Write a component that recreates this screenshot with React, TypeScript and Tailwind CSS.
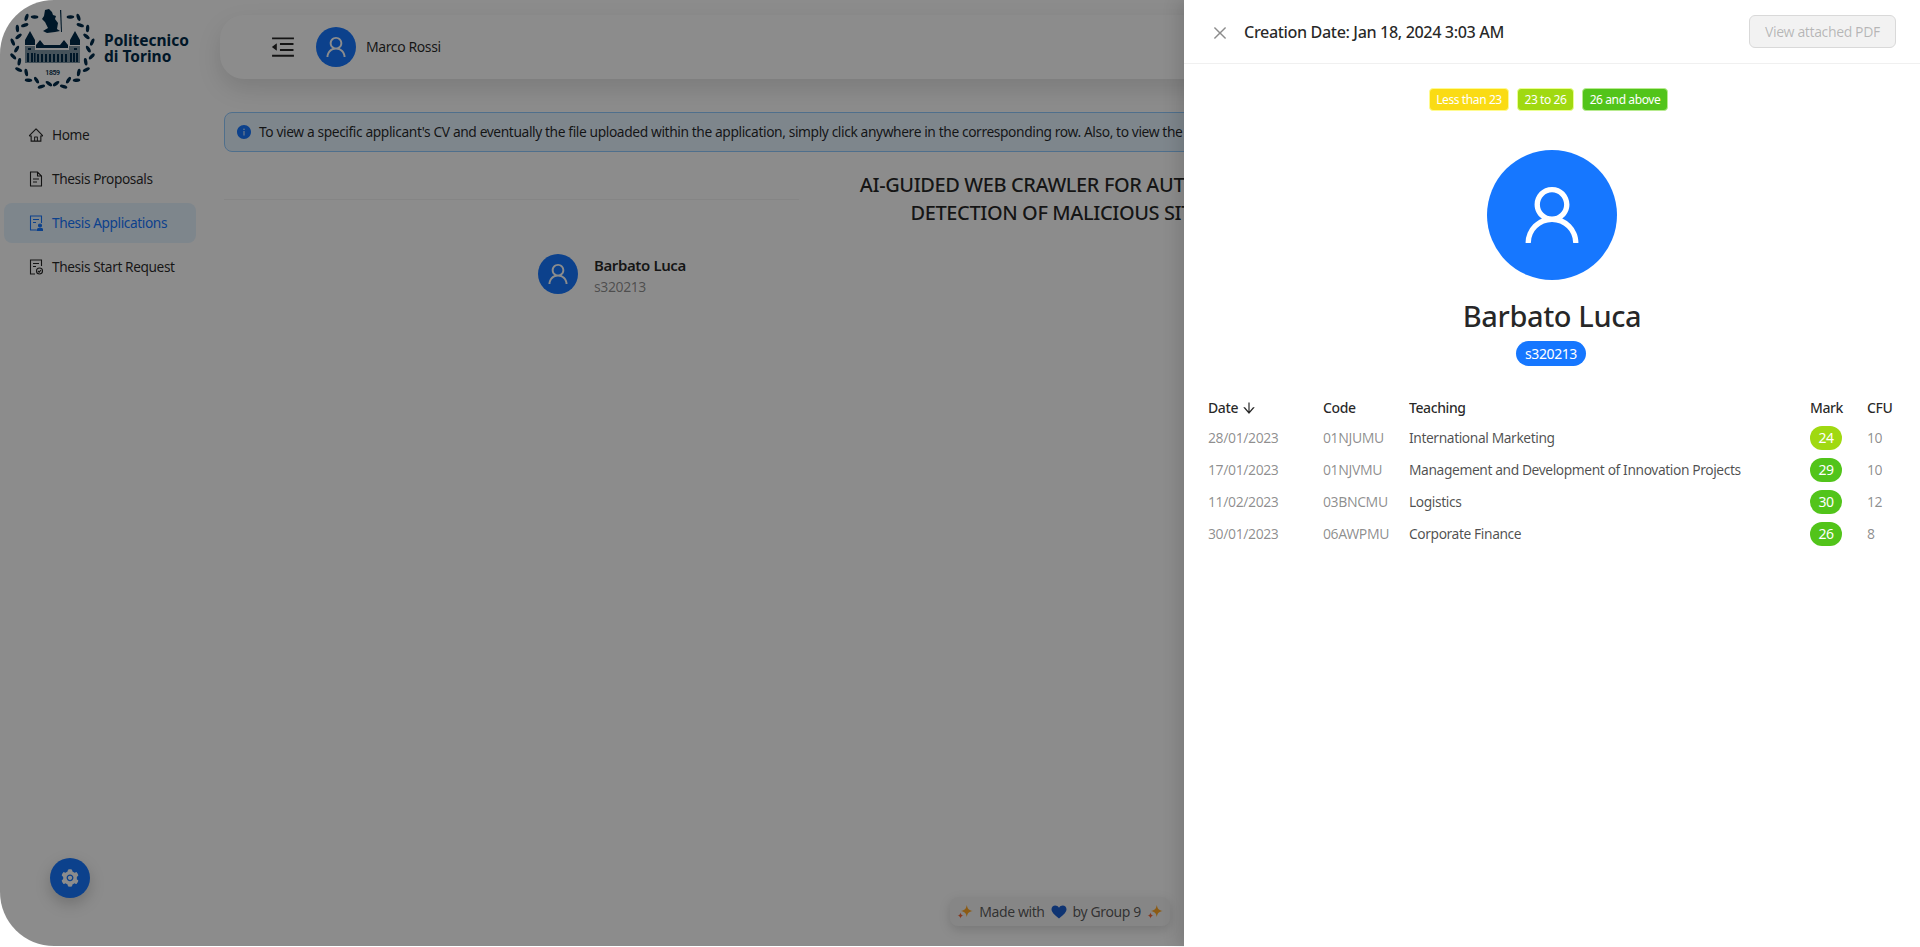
import {
  AiFillInfoCircle,
  AiFillSetting,
  AiOutlineArrowDown,
  AiOutlineClose,
  AiOutlineHome,
  AiOutlineMenuFold,
  AiOutlineUser,
} from "react-icons/ai";
import type { ReactNode } from "react";

const font = "font-['Noto_Sans','Liberation_Sans',sans-serif] tracking-[-0.025em]";

const EXAMS = [
  { date: "28/01/2023", code: "01NJUMU", name: "International Marketing", mark: 24, cfu: 10 },
  { date: "17/01/2023", code: "01NJVMU", name: "Management and Development of Innovation Projects", mark: 29, cfu: 10 },
  { date: "11/02/2023", code: "03BNCMU", name: "Logistics", mark: 30, cfu: 12 },
  { date: "30/01/2023", code: "06AWPMU", name: "Corporate Finance", mark: 26, cfu: 8 },
];

function DocIcon({ children }: { children: ReactNode }) {
  return (
    <svg viewBox="0 0 14 16" className="h-4 w-[14px] shrink-0" fill="none" stroke="currentColor" strokeWidth="1.1">
      {children}
    </svg>
  );
}

function Logo() {
  // two rows of laurel leaves, mirrored on each side of the crest
  const leaves = Array.from({ length: 15 }, (_, i) => 30 + i * 10.300).flatMap((deg, i) => {
    const a = (deg * Math.PI) / 180;
    const radius = i % 2 ? 1.03 : 0.92;
    return [-1, 1].map((side) => ({
      x: 44.5 + side * 39 * radius * Math.sin(a),
      y: 42 - 39 * radius * Math.cos(a),
      r: side * (deg + 90 + (i % 2 ? 32 : -32)),
    }));
  });
  return (
    <svg viewBox="0 0 88 84" className="h-[84px] w-[88px] shrink-0 text-[#002b49]" fill="currentColor">
      {leaves.map((l, i) => (
        <ellipse key={i} cx={l.x} cy={l.y} rx="1.700" ry="3.800" transform={`rotate(${l.r} ${l.x} ${l.y})`} />
      ))}
      <path d="M37 4l4-1 3 3 1 3 3 1-1 3 3 4-1 6 3 2-5 1-8 1-4-2 5-3-3-6-3-3 2-3z" />
      <path d="M52 4l1.200 0 .8 22-1 0z" />
      <path d="M17 34l5-9 5 9v5H17zM62 34l5-9 5 9v5H62z" />
      <path d="M28 39l4-5 4 5 16 0 4-5 4 5v3H28z" />
      <path d="M17 40h10v4h34v-4h11v17H17z" opacity=".5" />
      <path d="M19 47h2v9h-2zM23 47h2v9h-2zM26 47h1.500v9H26zM29 48h2v8h-2zM33 48h2v8h-2zM37 48h2v8h-2zM41 48h2v8h-2zM45 48h2v8h-2zM49 48h2v8h-2zM53 48h2v8h-2zM57 48h2v8h-2zM62 47h2v9h-2zM65 47h2v9h-2zM68 47h2v9h-2z" />
      <path d="M20 42h3v2h-3zM66 42h3v2h-3z" />
      <text x="44.500" y="69" textAnchor="middle" fontSize="7" fontWeight="600" fontFamily="Roboto, sans-serif">1859</text>
    </svg>
  );
}

function NavItem({ icon, label, active }: { icon: ReactNode; label: string; active?: boolean }) {
  return (
    <div
      className={`mx-1 flex h-10 items-center gap-2 rounded-lg pl-6 text-[13.700px] ${
        active ? "bg-[#e6f4ff] text-[#1677ff]" : "text-black/85"
      }`}
    >
      <span className="flex w-[16px] justify-center">{icon}</span>
      {label}
    </div>
  );
}

function Sparkle() {
  return (
    <svg viewBox="0 0 16 16" className="h-[16px] w-[16px] shrink-0">
      <path d="M9.800 1c.7 3.900 2.100 5.300 6 6-3.900.7-5.300 2.100-6 6-.7-3.900-2.100-5.300-6-6 3.900-.7 5.300-2.100 6-6z" fill="#ffa726" />
      <path d="M3.500 8.500c.4 2 1.100 2.700 3 3-1.900.4-2.600 1.100-3 3.100-.4-2-1.100-2.700-3-3.100 1.900-.3 2.600-1 3-3z" fill="#f4693a" />
    </svg>
  );
}

function Legend({ label, color }: { label: string; color: string }) {
  return <span className={`flex h-[23px] items-center justify-center rounded border text-xs text-white ${color}`}>{label}</span>;
}

export default function App() {
  return (
    <div className={`relative h-[947px] w-[1920px] overflow-hidden bg-white ${font}`}>
      {/* page behind the drawer */}
      <div className="relative h-[946px] overflow-hidden rounded-l-[54px] bg-white">
        <div className="flex h-full">
          <aside className="flex w-[200px] shrink-0 flex-col">
            <div className="flex h-[92px] items-start pt-[6px] pl-[8px]">
              <Logo />
              <div className="mt-[26px] ml-[8px] flex flex-col text-[15.500px] leading-[16px] font-bold tracking-normal text-[#002b49]">
                <span>Politecnico</span>
                <span>di Torino</span>
              </div>
            </div>
            <nav className="mt-[23px] flex flex-col gap-1">
              <NavItem icon={<AiOutlineHome size={16} />} label="Home" />
              <NavItem
                label="Thesis Proposals"
                icon={
                  <DocIcon>
                    <path d="M1.500 1h7l4 4v10h-11zM8.500 1v4h4M4 8h6M4 11h4" />
                  </DocIcon>
                }
              />
              <NavItem
                active
                label="Thesis Applications"
                icon={
                  <DocIcon>
                    <path d="M7 15H1.500V1h11v7M4 4.500h6M4 7.500h3" />
                    <circle cx="11" cy="10.500" r="1.500" fill="currentColor" />
                    <path d="M8 15.500c0-3 6-3 6 0z" fill="currentColor" />
                  </DocIcon>
                }
              />
              <NavItem
                label="Thesis Start Request"
                icon={
                  <DocIcon>
                    <path d="M6 15H1.500V1h11v6M4 4.500h6M4 7.500h3" />
                    <circle cx="10.500" cy="12" r="3" />
                    <path d="M9 12l1.200 1.200L12 11" />
                  </DocIcon>
                }
              />
            </nav>
            <div className="mt-auto mb-[48px] ml-[50px] flex h-10 w-10 items-center justify-center rounded-full bg-[#1677ff] text-white shadow-[0_6px_16px_rgba(0,0,0,0.2)]">
              <AiFillSetting size={20} />
            </div>
          </aside>

          <main className="relative flex min-w-0 flex-1 flex-col pr-5">
            <header className="mt-[15px] ml-5 flex h-16 shrink-0 items-center rounded-3xl bg-white pl-[49px] shadow-[0_10px_24px_rgba(0,0,0,0.12)]">
              <AiOutlineMenuFold size={28} className="text-black/85" />
              <div className="ml-[19px] flex h-10 w-10 items-center justify-center rounded-full bg-[#1677ff] text-white">
                <AiOutlineUser size={26} />
              </div>
              <span className="ml-[10px] text-sm text-black/85">Marco Rossi</span>
            </header>

            <div className="mt-[33px] ml-6 flex h-10 shrink-0 items-center gap-[7px] overflow-hidden rounded-lg border border-[#91caff] bg-[#e6f4ff] pl-[11px] text-[13.800px] whitespace-nowrap text-black/85">
              <AiFillInfoCircle size={16} className="shrink-0 text-[#1677ff]" />
              <span>
                To view a specific applicant's CV and eventually the file uploaded within the application, simply click anywhere in the corresponding row. Also, to view the details of a thesis proposal, simply click on its title.
              </span>
            </div>

            <div className="mt-[19px] ml-6 flex items-center">
              <div className="h-px flex-1 bg-black/5" />
              <h2 className="w-[526px] px-[40px] text-center text-[20px] leading-[28px] font-medium text-black/85">
                AI-GUIDED WEB CRAWLER FOR AUTOMATED DETECTION OF MALICIOUS SITES
              </h2>
              <div className="h-px flex-1 bg-black/5" />
            </div>

            <div className="mt-[26px] ml-[338px] flex items-center gap-[16px]">
              <div className="flex h-10 w-10 items-center justify-center rounded-full bg-[#1677ff] text-white">
                <AiOutlineUser size={26} />
              </div>
              <div className="flex translate-y-[2px] flex-col">
                <span className="text-[15px] leading-[21px] font-semibold text-black/85">Barbato Luca</span>
                <span className="text-sm leading-[21px] text-black/45">s320213</span>
              </div>
            </div>
          </main>
        </div>

        <div className="absolute bottom-[20px] left-[950px] flex h-[29px] w-[220px] items-center justify-center gap-[6px] rounded-lg bg-[#f5f5f5] text-sm text-black/65 shadow-[0_4px_12px_rgba(0,0,0,0.15)]">
          <Sparkle />
          Made with
          <svg viewBox="0 0 16 16" className="h-4 w-4 shrink-0">
            <path d="M8 14.500C3 10.500 .5 8 .5 5.200 .5 3 2.200 1.500 4.200 1.500c1.500 0 3 .8 3.800 2.200.8-1.400 2.300-2.200 3.800-2.200 2 0 3.700 1.500 3.700 3.700C15.500 8 13 10.500 8 14.500z" fill="#1d5fd0" />
          </svg>
          by Group 9
          <Sparkle />
        </div>

        {/* drawer mask */}
        <div className="absolute inset-0 bg-black/45" />
      </div>

      {/* detail drawer */}
      <aside className="absolute inset-y-0 right-0 flex w-[736px] flex-col bg-white shadow-[-6px_0_16px_rgba(0,0,0,0.12)]">
        <div className="flex h-[64px] shrink-0 items-center border-b border-[#f0f0f0] pt-[2px] pr-6 pl-[27px]">
          <AiOutlineClose size={18} className="text-black/45" />
          <span className="ml-[15px] text-[16.200px] font-medium text-black/85">Creation Date: Jan 18, 2024 3:03 AM</span>
          <button className="ml-auto -mt-[2px] h-[33px] w-[147px] rounded-md border border-[#d9d9d9] bg-black/5 text-sm text-black/25">
            View attached PDF
          </button>
        </div>

        <div className="flex flex-col items-center">
          <div className="mt-6 mr-[7px] flex gap-2">
            <Legend label="Less than 23" color="w-[80px] border-[#fffb8f] bg-[#fadb14]" />
            <Legend label="23 to 26" color="w-[57px] border-[#eaff8f] bg-[#a0d911]" />
            <Legend label="26 and above" color="w-[86px] border-[#b7eb8f] bg-[#52c41a]" />
          </div>
          <div className="mt-[39px] flex h-[130px] w-[130px] items-center justify-center rounded-full bg-[#1677ff] text-white">
            <AiOutlineUser size={72} />
          </div>
          <h1 className="mt-[16px] text-[29px] leading-[40px] font-medium text-black/85">Barbato Luca</h1>
          <span className="mt-[5px] mr-[2px] flex h-[25px] w-[70px] items-center justify-center rounded-full bg-[#1677ff] text-sm text-white">
            s320213
          </span>
        </div>

        <table className="mt-[28px] ml-[16px] w-[706px] table-fixed text-sm">
          <colgroup>
            <col className="w-[115px]" />
            <col className="w-[86px]" />
            <col className="w-[401px]" />
            <col className="w-[57px]" />
            <col />
          </colgroup>
          <thead>
            <tr className="h-7 text-left font-medium text-black/85">
              <th className="pl-2 font-medium">
                <span className="flex items-center gap-[3px]">
                  Date <AiOutlineArrowDown size={16} />
                </span>
              </th>
              <th className="pl-2 font-medium">Code</th>
              <th className="pl-2 font-medium">Teaching</th>
              <th className="pl-2 font-medium">Mark</th>
              <th className="pl-2 font-medium">CFU</th>
            </tr>
          </thead>
          <tbody>
            {EXAMS.map((exam) => (
              <tr key={exam.code} className="h-8">
                <td className="pl-2 text-black/45">{exam.date}</td>
                <td className="pl-2 text-black/45">{exam.code}</td>
                <td className="pl-2 text-[13.800px] text-black/70">{exam.name}</td>
                <td className="pl-2">
                  <span
                    className={`flex h-6 w-8 items-center justify-center rounded-full text-white ${
                      exam.mark < 26 ? "bg-[#a0d911]" : "bg-[#52c41a]"
                    }`}
                  >
                    {exam.mark}
                  </span>
                </td>
                <td className="pl-2 text-black/45">{exam.cfu}</td>
              </tr>
            ))}
          </tbody>
        </table>
      </aside>
    </div>
  );
}
